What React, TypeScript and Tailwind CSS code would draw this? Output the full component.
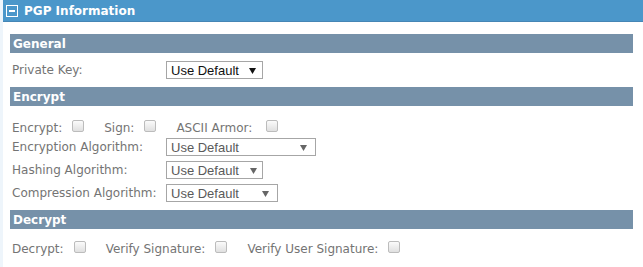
import React from "react";

const font = { fontFamily: '"DejaVu Sans", Verdana, sans-serif' };

function Bar({ title }: { title: string }) {
  return (
    <div className="h-[19px] bg-[#7691a9] flex items-center pl-[3px] text-white font-bold text-[12px] leading-none">
      {title}
    </div>
  );
}

function Check() {
  return (
    <span className="inline-block w-[12px] h-[12px] rounded-[2px] border border-[#bcbcbc] bg-gradient-to-b from-[#fbfbfb] to-[#e0e0e0]" />
  );
}

function Sel({ w, arrow, dark }: { w: string; arrow: string; dark?: boolean }) {
  return (
    <div
      className={`relative h-[18px] border border-[#a6a6a6] bg-white flex items-center pl-[4px] text-[13px] leading-none ${w} ${dark ? "text-[#111]" : "text-[#5a5a5a]"}`}
      style={{ fontFamily: '"Liberation Sans", Arial, sans-serif' }}
    >
      Use Default
      <svg className={`absolute top-[6px] ${arrow}`} width="7" height="6" viewBox="0 0 7 6">
        <path d="M0 0 H7 L3.5 6 Z" fill={dark ? "#111" : "#666"} />
      </svg>
    </div>
  );
}

function Row({ label, children }: { label: string; children: React.ReactNode }) {
  return (
    <div className="flex items-center h-[18px]">
      <div className="w-[156px] pl-[2px]">{label}</div>
      {children}
    </div>
  );
}

export default function App() {
  return (
    <div
      className="w-[643px] h-[267px] bg-white border-l-[3px] border-[#eef5fb] overflow-hidden text-[12px] text-[#747474]"
      style={font}
    >
      <div className="h-[22px] -ml-[3px] bg-[#4b97ca] border-b border-[#4586b5] flex items-center pl-[6px] gap-[6px]">
        <span className="w-[12px] h-[12px] border border-white flex items-center justify-center">
          <span className="w-[6px] h-[2px] bg-white" />
        </span>
        <span className="text-white font-bold text-[12px] leading-none">PGP Information</span>
      </div>
      <div className="pl-[7px] pr-[10px]">
        <div className="mt-[12px]">
          <Bar title="General" />
        </div>
        <div className="h-[34px] flex items-center">
          <div className="w-[156px] pl-[2px]">Private Key:</div>
          <Sel w="w-[97px]" arrow="right-[6px]" dark />
        </div>
        <Bar title="Encrypt" />
        <div className="h-[18px] mt-[13px] flex items-center pl-[2px]">
          <span>Encrypt:</span>
          <span className="ml-[10px]"><Check /></span>
          <span className="ml-[20px]">Sign:</span>
          <span className="ml-[10px]"><Check /></span>
          <span className="ml-[20px]">ASCII Armor:</span>
          <span className="ml-[14px]"><Check /></span>
        </div>
        <div className="mt-[1px] flex flex-col gap-[5px]">
          <Row label="Encryption Algorithm:">
            <Sel w="w-[150px]" arrow="right-[8px]" />
          </Row>
          <Row label="Hashing Algorithm:">
            <Sel w="w-[97px]" arrow="right-[5px]" />
          </Row>
          <Row label="Compression Algorithm:">
            <Sel w="w-[112px]" arrow="right-[8px]" />
          </Row>
        </div>
        <div className="mt-[8px]">
          <Bar title="Decrypt" />
        </div>
        <div className="h-[18px] mt-[11px] flex items-center pl-[2px]">
          <span>Decrypt:</span>
          <span className="ml-[10px]"><Check /></span>
          <span className="ml-[20px]">Verify Signature:</span>
          <span className="ml-[10px]"><Check /></span>
          <span className="ml-[20px]">Verify User Signature:</span>
          <span className="ml-[10px]"><Check /></span>
        </div>
      </div>
    </div>
  );
}
